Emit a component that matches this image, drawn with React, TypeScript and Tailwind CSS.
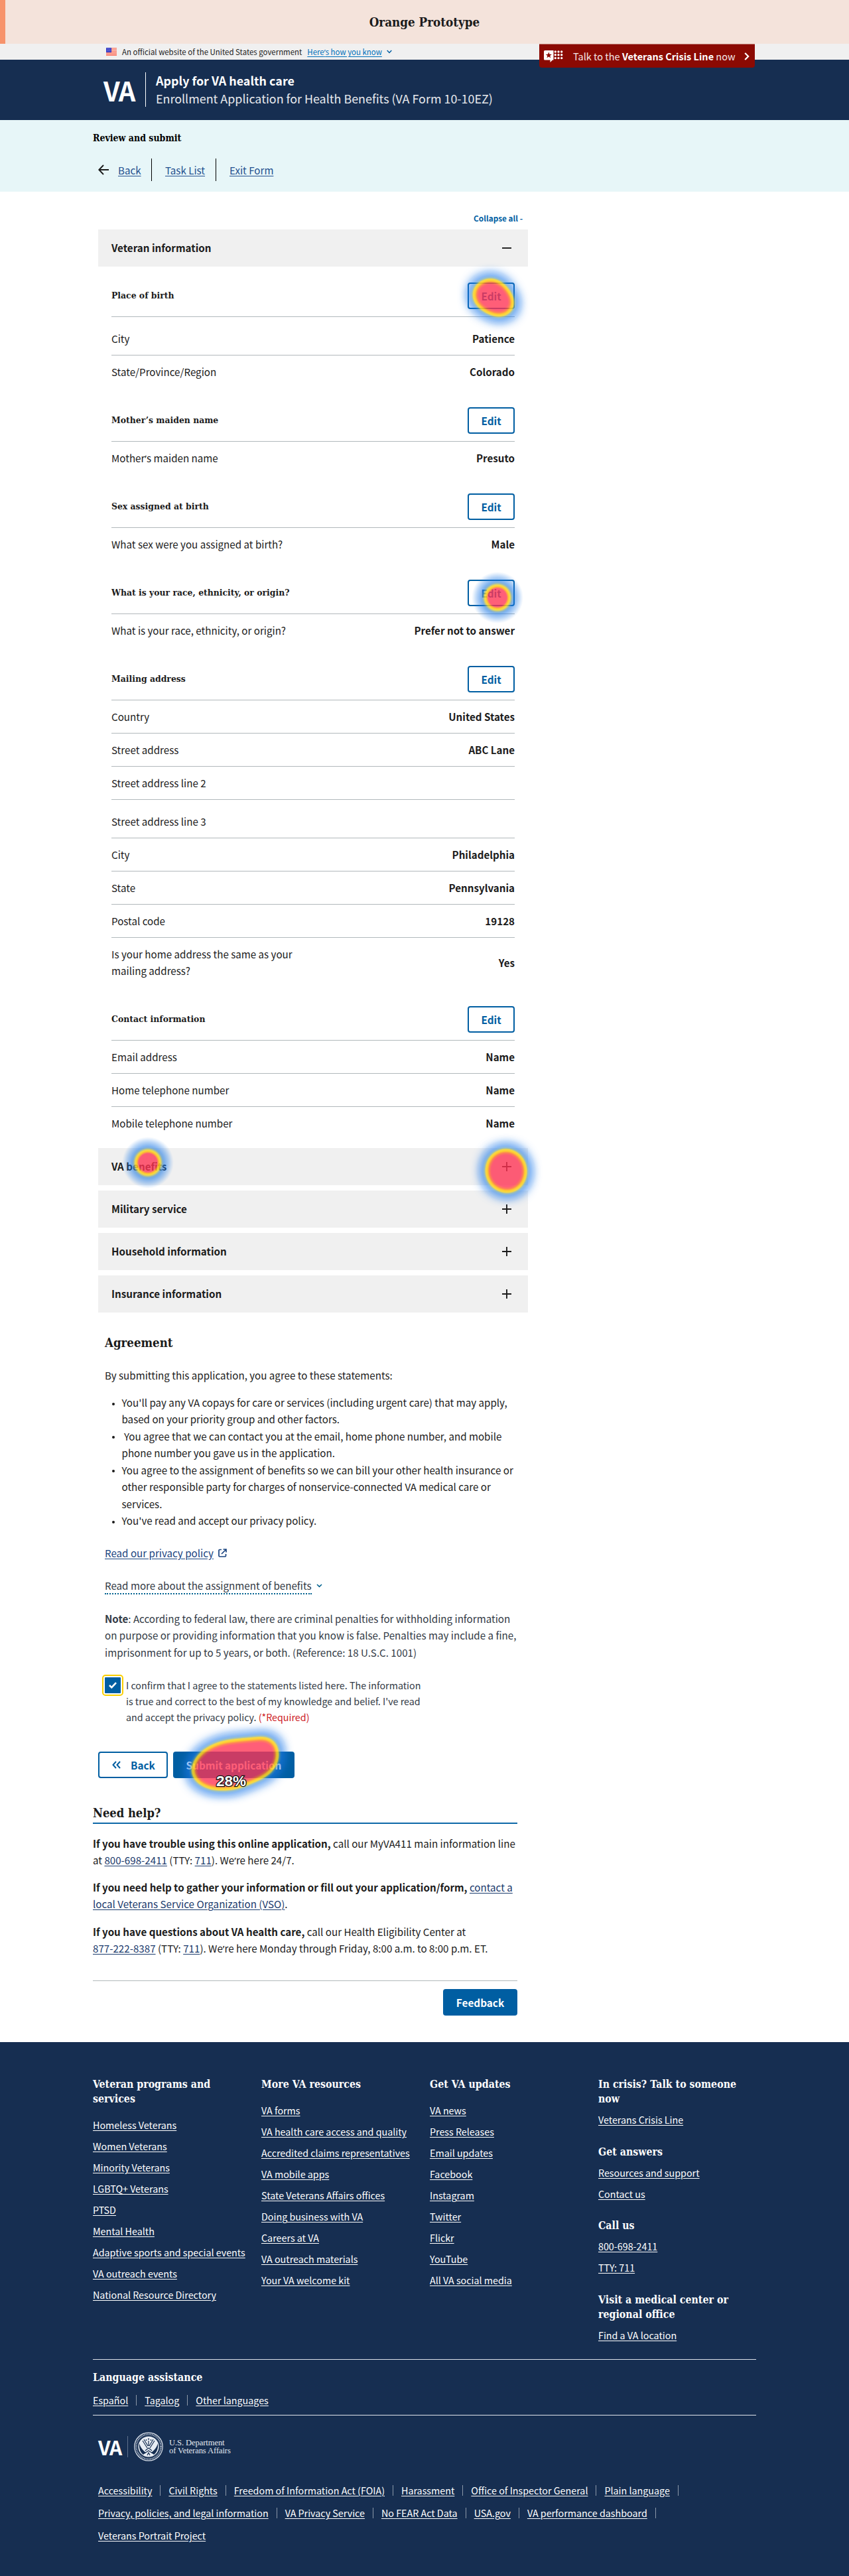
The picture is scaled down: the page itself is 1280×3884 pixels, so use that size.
import { Fragment, type ReactNode } from 'react';

const SERIF = "font-['DejaVu_Serif_Condensed','DejaVu_Serif',serif] font-bold";

/* Curly apostrophe set in a proportional face. */
function Apos() {
  return <span className="font-['Noto_Sans',sans-serif] leading-none">’</span>;
}

/* ---------- click heat map ---------- */

function HeatDefs() {
  return (
    <svg className="absolute h-0 w-0" aria-hidden="true">
      <defs>
        <filter id="heat" x="-60%" y="-60%" width="220%" height="220%" colorInterpolationFilters="sRGB">
          <feGaussianBlur stdDeviation="10" />
          <feColorMatrix values="0 0 0 1 0  0 0 0 1 0  0 0 0 1 0  0 0 0 1 0" />
          <feComponentTransfer>
            <feFuncR type="table" tableValues="0.12 0.12 0.12 0.12 0.35 0.97 1 1 1 1 1" />
            <feFuncG type="table" tableValues="0.48 0.48 0.48 0.48 0.6 0.84 0.78 0.4 0.2 0.2 0.2" />
            <feFuncB type="table" tableValues="0.92 0.92 0.92 0.92 0.7 0.18 0.1 0.2 0.33 0.33 0.33" />
            <feFuncA type="table" tableValues="0 0.27 0.42 0.53 0.64 0.88 0.9 0.82 0.79 0.79 0.79" />
          </feComponentTransfer>
        </filter>
      </defs>
    </svg>
  );
}

function HeatShape({ points }: { points: string }) {
  return (
    <svg className="pointer-events-none absolute top-0 left-0 z-10 overflow-visible" width="1" height="1" aria-hidden="true">
      <g filter="url(#heat)">
        <polygon points={points} fill="#000" stroke="#000" strokeWidth="10" strokeLinejoin="round" />
      </g>
    </svg>
  );
}

function HeatDot({ className }: { className: string }) {
  return (
    <span
      className={`pointer-events-none absolute z-10 h-[78px] w-[78px] rounded-full bg-[radial-gradient(closest-side,rgba(255,52,84,0.79)_0%,rgba(255,52,84,0.79)_35%,rgba(255,195,20,0.88)_43%,rgba(245,214,40,0.86)_48%,rgba(80,145,195,0.7)_57%,rgba(30,122,230,0.57)_63%,rgba(30,122,230,0.33)_79%,rgba(30,122,230,0.08)_94%,rgba(30,122,230,0)_100%)] ${className}`}
    />
  );
}

/* ---------- form summary ---------- */

type Row = { label: ReactNode; value?: string; roomy?: boolean };
type Group = { title: string; rows: Row[]; heat?: ReactNode };

const groups: Group[] = [
  {
    title: 'Place of birth',
    rows: [
      { label: 'City', value: 'Patience', roomy: true },
      { label: 'State/Province/Region', value: 'Colorado' },
    ],
    heat: <HeatShape points="11,16 17,4 33,-2.5 47,1 59,14 67,29 63,43 47,48 27,40 14,29" />,
  },
  {
    title: 'Mother’s maiden name',
    rows: [
      {
        label: (
          <>
            Mother
            <Apos />s maiden name
          </>
        ),
        value: 'Presuto',
      },
    ],
  },
  { title: 'Sex assigned at birth', rows: [{ label: 'What sex were you assigned at birth?', value: 'Male' }] },
  {
    title: 'What is your race, ethnicity, or origin?',
    rows: [{ label: 'What is your race, ethnicity, or origin?', value: 'Prefer not to answer' }],
    heat: <HeatDot className="top-[-12px] left-[6px]" />,
  },
  {
    title: 'Mailing address',
    rows: [
      { label: 'Country', value: 'United States' },
      { label: 'Street address', value: 'ABC Lane' },
      { label: 'Street address line 2' },
      { label: 'Street address line 3', roomy: true },
      { label: 'City', value: 'Philadelphia' },
      { label: 'State', value: 'Pennsylvania' },
      { label: 'Postal code', value: '19128' },
      {
        label: (
          <>
            Is your home address the same as your
            <br />
            mailing address?
          </>
        ),
        value: 'Yes',
      },
    ],
  },
  {
    title: 'Contact information',
    rows: [
      { label: 'Email address', value: 'Name' },
      { label: 'Home telephone number', value: 'Name' },
      { label: 'Mobile telephone number', value: 'Name' },
    ],
  },
];

function FormGroup({ group }: { group: Group }) {
  return (
    <section>
      <div className="flex h-[52px] items-start justify-between border-b border-[#b1b8bb]">
        <h3 className={`${SERIF} text-[13.8px] leading-[38px]`}>{group.title}</h3>
        <div className="relative">
          <button className="flex h-10 w-[71px] items-center justify-center rounded-[4px] border-2 border-[#005ea2] bg-white pb-px text-[15.3px] leading-5 font-bold text-[#005ea2]">
            Edit
          </button>
          {group.heat}
        </div>
      </div>
      {group.rows.map((row, i) => (
        <div
          key={i}
          className={`flex items-center justify-between pb-3 ${row.roomy ? 'pt-5' : 'pt-3'} ${
            i < group.rows.length - 1 ? 'border-b border-[#b1b8bb]' : ''
          }`}
        >
          <span>{row.label}</span>
          <span className="font-bold">{row.value}</span>
        </div>
      ))}
    </section>
  );
}

function AccordionBar({ title, open, children }: { title: string; open?: boolean; children?: ReactNode }) {
  return (
    <div className="relative flex h-14 items-center justify-between bg-[#f0f0f0] pr-[25px] pl-5">
      <span className="pb-0.5 text-[15.2px] leading-6 font-bold">{title}</span>
      <svg width="14" height="14" viewBox="0 0 14 14" className="mb-px" stroke="#1b1b1b" strokeWidth="1.9">
        <path d={open ? 'M0 7H14' : 'M0 7H14M7 0V14'} />
      </svg>
      {children}
    </div>
  );
}

/* ---------- footer ---------- */

const programs = [
  'Homeless Veterans',
  'Women Veterans',
  'Minority Veterans',
  'LGBTQ+ Veterans',
  'PTSD',
  'Mental Health',
  'Adaptive sports and special events',
  'VA outreach events',
  'National Resource Directory',
];
const resources = [
  'VA forms',
  'VA health care access and quality',
  'Accredited claims representatives',
  'VA mobile apps',
  'State Veterans Affairs offices',
  'Doing business with VA',
  'Careers at VA',
  'VA outreach materials',
  'Your VA welcome kit',
];
const updates = [
  'VA news',
  'Press Releases',
  'Email updates',
  'Facebook',
  'Instagram',
  'Twitter',
  'Flickr',
  'YouTube',
  'All VA social media',
];
const legal = [
  ['Accessibility', 'Civil Rights', 'Freedom of Information Act (FOIA)', 'Harassment', 'Office of Inspector General', 'Plain language'],
  ['Privacy, policies, and legal information', 'VA Privacy Service', 'No FEAR Act Data', 'USA.gov', 'VA performance dashboard'],
  ['Veterans Portrait Project'],
];

function FooterHeading({ children }: { children: ReactNode }) {
  return <h4 className={`${SERIF} text-[15.8px] leading-[22px]`}>{children}</h4>;
}

function FooterLinks({ items }: { items: string[] }) {
  return (
    <ul>
      {items.map((item) => (
        <li key={item} className="h-8 leading-8 whitespace-nowrap">
          <a className="underline underline-offset-2">{item}</a>
        </li>
      ))}
    </ul>
  );
}

function Bar() {
  return <span className="mx-3 h-4 w-px bg-[#8b97a8]" />;
}

function Seal() {
  return (
    <svg width="44" height="44" viewBox="0 0 44 44">
      <circle cx="22" cy="22" r="21.2" fill="none" stroke="#dfe5ee" strokeWidth="1.2" />
      <circle cx="22" cy="22" r="18.6" fill="none" stroke="#aab6c8" strokeWidth="2.4" strokeDasharray="1.3 1" />
      <circle cx="22" cy="22" r="15.6" fill="#e8edf4" />
      <path d="M8 17c2 7 6 11 10 14l-4 3c-4-3-7-9-6-17zM36 17c-2 7-6 11-10 14l4 3c4-3 7-9 6-17z" fill="#162e51" />
      <path
        d="M13 13l7 11M31 13l-7 11M15 11l6 10M29 11l-6 10M22 13v8M17 28l5-4 5 4M16 32l6-4 6 4M20 35l2-4 2 4"
        stroke="#162e51"
        strokeWidth="1.2"
        fill="none"
      />
      <circle cx="22" cy="10.5" r="1.1" fill="#162e51" />
      <circle cx="18.5" cy="12" r=".9" fill="#162e51" />
      <circle cx="25.5" cy="12" r=".9" fill="#162e51" />
    </svg>
  );
}

function Flag() {
  return (
    <svg width="16" height="12" viewBox="0 0 16 12" className="shrink-0">
      <rect width="16" height="12" fill="#fbd3c8" />
      <path d="M0 .8H16M0 3H16M0 5.2H16M0 7.3H16M0 9.4H16M0 11.4H16" stroke="#f9705f" strokeWidth="1.1" />
      <rect width="8" height="7" fill="#2f35c4" />
      <path d="M1 1.5h6M2 3.2h5M1 4.9h6" stroke="#c9caf5" strokeWidth=".8" strokeDasharray=".8 1" />
    </svg>
  );
}

const link = 'underline underline-offset-2 text-[#1a3a6c]';

export default function App() {
  return (
    <div className="relative h-[3884px] w-[1280px] overflow-hidden bg-white font-['Noto_Sans_CJK_SC',sans-serif] text-[15.15px] leading-[25px] text-[#1b1b1b]">
      <HeatDefs />

      <div className="flex h-[66px] items-center justify-center border-l-8 border-[#f7936b] bg-[#f4e3db] pr-2">
        <h1 className={`${SERIF} text-[18.7px] leading-6`}>Orange Prototype</h1>
      </div>

      <div className="relative flex h-6 items-center bg-[#f0f0f0] pl-[160px] text-[11.45px] leading-6">
        <Flag />
        <span className="ml-2">An official website of the United States government</span>
        <a className="ml-2 text-[#0071bb] underline underline-offset-2">
          Here
          <Apos />s how you know
        </a>
        <svg width="8" height="6" viewBox="0 0 8 6" className="ml-[7px]" fill="none" stroke="#005ea2" strokeWidth="1.5">
          <path d="M.7 1l3.3 3.4L7.3 1" />
        </svg>
        <a className="absolute top-0 left-[813px] z-10 flex h-9 w-[325px] items-center rounded-b-[4px] border-t border-[#c08078] bg-[#8b0a03] pt-px pl-[7px] text-[14.5px] text-white">
          <svg width="29" height="18" viewBox="0 0 29 18" fill="#fff">
            <path d="M1.5 0H14.5V14.5H13L9.5 18V14.5H1.5Q0 14.5 0 13V1.5Q0 0 1.5 0Z" />
            <path d="M7.3 2.6l1.2 3.2 3.4.1-2.7 2.1 1 3.3-2.9-1.9-2.900 1.900 1-3.300L2.700 5.900l3.400-.1z" fill="#8b0a03" />
            {[2, 6.8, 11.6].map((y) =>
              [17.3, 22, 26.7].map((x) => <circle key={`${x}-${y}`} cx={x} cy={y} r="1.7" />),
            )}
          </svg>
          <span className="ml-[15px] whitespace-nowrap text-white/90">
            Talk to the <b className="text-white">Veterans Crisis Line</b> now
          </span>
          <svg width="8" height="12" viewBox="0 0 8 12" className="mr-2 ml-auto" fill="none" stroke="#fff" strokeWidth="2.2">
            <path d="M1.2 1l5 5-5 5" />
          </svg>
        </a>
      </div>

      <header className="flex h-[91px] items-start bg-[#162e51] pt-[18px] pl-[156px] text-white">
        <span className="mt-[8px] w-[63px] text-[40px] leading-[40px] font-bold tracking-[-1.2px]">VA</span>
        <span className="mt-px h-[52px] w-px bg-white" />
        <div className="ml-[15px] text-[17.9px] leading-[26.5px]">
          <div className="font-bold">Apply for VA health care</div>
          <div className="text-white/90">Enrollment Application for Health Benefits (VA Form 10-10EZ)</div>
        </div>
      </header>

      <div className="h-[108px] bg-[#e7f6f8] pt-[15px] pl-[140px]">
        <h2 className={`${SERIF} text-[14px] leading-6 text-black`}>Review and submit</h2>
        <div className="mt-[19px] flex h-[34px] items-center pl-2 text-[#24508f]">
          <svg width="16" height="16" viewBox="0 0 16 16" fill="none" stroke="#1b1b1b" strokeWidth="1.9">
            <path d="M16 8H1.5M8 1L1.3 8 8 15" />
          </svg>
          <a className="ml-3.5 w-[35px] underline underline-offset-2">Back</a>
          <span className="ml-[15px] h-full w-px bg-black" />
          <a className="ml-5 w-[60px] whitespace-nowrap underline underline-offset-2">Task List</a>
          <span className="ml-4 h-full w-px bg-black" />
          <a className="ml-5 whitespace-nowrap underline underline-offset-2">Exit Form</a>
        </div>
      </div>

      <main className="ml-[148px] w-[648px]">
        <div className="pt-[30px] pr-2 pb-[7px] text-right text-[11.8px] leading-5 font-bold text-[#005ea2]">Collapse all -</div>
        <AccordionBar title="Veteran information" open />
        <div className="flex flex-col gap-[29px] px-5 pt-6 pb-[13px]">
          {groups.map((g) => (
            <FormGroup key={g.title} group={g} />
          ))}
        </div>
        <div className="flex flex-col gap-2">
          <AccordionBar title="VA benefits">
            <HeatDot className="top-[-17px] left-[36px]" />
            <HeatShape points="615,5 627,8 637,17 642,30 641,45 634,57 623,63 611,63 598,57 590,46 588,33 591,19 600,9" />
          </AccordionBar>
          <AccordionBar title="Military service" />
          <AccordionBar title="Household information" />
          <AccordionBar title="Insurance information" />
        </div>

        <section className="px-2.5 pt-[31.5px]">
          <h2 className={`${SERIF} text-[18.5px] leading-7`}>Agreement</h2>
          <p className="mt-[22px] leading-[25.5px]">By submitting this application, you agree to these statements:</p>
          <ul className="mt-4 list-none pl-[25.5px] leading-[25.43px] whitespace-nowrap [&>li]:relative [&>li]:before:absolute [&>li]:before:top-[12.5px] [&>li]:before:-left-[15px] [&>li]:before:size-1 [&>li]:before:rounded-full [&>li]:before:bg-[#1b1b1b]">
            <li>
              You'll pay any VA copays for care or services (including urgent care) that may apply,
              <br />
              based on your priority group and other factors.
            </li>
            <li>
              &nbsp;You agree that we can contact you at the email, home phone number, and mobile
              <br />
              phone number you gave us in the application.
            </li>
            <li>
              You agree to the assignment of benefits so we can bill your other health insurance or
              <br />
              other responsible party for charges of nonservice-connected VA medical care or
              <br />
              services.
            </li>
            <li>You've read and accept our privacy policy.</li>
          </ul>
          <div className="mt-[23px] flex h-[25.5px] items-center leading-[25.5px] text-[#1a4480]">
            <a className="underline underline-offset-2">Read our privacy policy</a>
            <svg width="13" height="13" viewBox="0 0 13 13" className="ml-[7px]" fill="none" stroke="#1a4480" strokeWidth="1.7">
              <path d="M5 1.5H2.3Q1 1.5 1 2.8V10.7Q1 12 2.3 12H10.2Q11.5 12 11.5 10.7V8M7.5 1H12V5.5M12 1L5 8" />
            </svg>
          </div>
          <div className="mt-6 flex h-[26px] items-center text-[#323a45]">
            <span className="h-[26px] border-b-2 border-dotted border-[#00618f] leading-[25.5px]">
              Read more about the assignment of benefits
            </span>
            <svg width="9" height="6" viewBox="0 0 9 6" className="ml-[7px]" fill="none" stroke="#00618f" strokeWidth="1.5">
              <path d="M1 1l3.5 3.4L8 1" />
            </svg>
          </div>
          <p className="mt-[23.5px] leading-[25.5px] whitespace-nowrap text-[#323a45]">
            <b>Note</b>: According to federal law, there are criminal penalties for withholding information
            <br />
            on purpose or providing information that you know is false. Penalties may include a fine,
            <br />
            imprisonment for up to 5 years, or both. (Reference: 18 U.S.C. 1001)
          </p>
          <div className="mt-[25px] flex text-[#323a45]">
            <span className="flex h-6 w-6 shrink-0 items-center justify-center rounded-[1px] bg-[#005ea2] outline-2 outline-offset-2 outline-[#face00]">
              <svg width="12" height="10" viewBox="0 0 12 10" fill="none" stroke="#fff" strokeWidth="2.6">
                <path d="M1 5l3.3 3.3L11 1.2" />
              </svg>
            </span>
            <p className="ml-2 text-[14.3px] leading-6 whitespace-nowrap">
              I confirm that I agree to the statements listed here. The information
              <br />
              is true and correct to the best of my knowledge and belief. I've read
              <br />
              and accept the privacy policy. <span className="text-[#cd2026]">(*Required)</span>
            </p>
          </div>
        </section>

        <div className="relative mt-10 flex gap-2 text-[15.3px] leading-5 font-bold">
          <button className="flex h-10 w-[105px] items-center rounded-[4px] border-2 border-[#005ea2] bg-white pl-[19px] text-[#005ea2]">
            <svg width="13" height="12" viewBox="0 0 13 12" fill="none" stroke="#005ea2" strokeWidth="2">
              <path d="M6 1L1.5 6 6 11M12 1L7.5 6 12 11" />
            </svg>
            <span className="ml-[15px]">Back</span>
          </button>
          <button className="h-10 w-[183px] rounded-[4px] bg-[#005ea2] whitespace-nowrap text-white">Submit application</button>
          <HeatShape points="144,31 149,14 164,-1 187,-11 212,-14 237,-16 254,-18 265,-11 268,4 265,19 252,33 227,44 202,53 172,53 152,44" />
          <span className="absolute top-[33px] left-[178px] z-20 font-['Liberation_Sans',sans-serif] text-[22.5px] leading-6 font-bold text-white [-webkit-text-stroke:2.6px_#111] [paint-order:stroke_fill]">
            28%
          </span>
        </div>
      </main>

      <section className="mt-10 ml-[140px] w-[640px]">
        <h2 className={`${SERIF} border-b-2 border-[#0d68a8] pb-px text-[18.2px] leading-[26px]`}>Need help?</h2>
        <div className="mt-[16.5px] flex flex-col gap-[16.8px] whitespace-nowrap">
          <p>
            <b>If you have trouble using this online application,</b> call our MyVA411 main information line
            <br />
            at <a className={link}>800-698-2411</a> (TTY: <a className={link}>711</a>). We
            <Apos />
            re here 24/7.
          </p>
          <p>
            <b>If you need help to gather your information or fill out your application/form,</b>{' '}
            <a className={link}>
              contact a
              <br />
              local Veterans Service Organization (VSO)
            </a>
            .
          </p>
          <p>
            <b>If you have questions about VA health care,</b> call our Health Eligibility Center at
            <br />
            <a className={link}>877-222-8387</a> (TTY: <a className={link}>711</a>). We
            <Apos />
            re here Monday through Friday, 8:00 a.m. to 8:00 p.m. ET.
          </p>
        </div>
        <div className="mt-9 flex h-[93px] justify-end border-t border-[#b1b8bb] pt-3">
          <button className="h-10 w-28 rounded-[4px] bg-[#005ea2] pb-px text-[15.3px] leading-5 font-bold text-white">Feedback</button>
        </div>
      </section>

      <footer className="h-[805px] bg-[#162e51] px-[140px] pt-[53px] text-[14.3px] text-white">
        <div className="grid h-[426px] grid-cols-[254px_254px_254px_238px] border-b border-[#dfe3ea]">
          <div className="flex flex-col gap-[12.4px]">
            <FooterHeading>
              Veteran programs and
              <br />
              services
            </FooterHeading>
            <FooterLinks items={programs} />
          </div>
          <div className="flex flex-col gap-[12.4px]">
            <FooterHeading>More VA resources</FooterHeading>
            <FooterLinks items={resources} />
          </div>
          <div className="flex flex-col gap-[12.4px]">
            <FooterHeading>Get VA updates</FooterHeading>
            <FooterLinks items={updates} />
          </div>
          <div className="flex flex-col gap-[21.5px] whitespace-nowrap">
            <div className="flex flex-col gap-1">
              <FooterHeading>
                In crisis? Talk to someone
                <br />
                now
              </FooterHeading>
              <FooterLinks items={['Veterans Crisis Line']} />
            </div>
            <div className="flex flex-col gap-1">
              <FooterHeading>Get answers</FooterHeading>
              <FooterLinks items={['Resources and support', 'Contact us']} />
            </div>
            <div className="flex flex-col gap-1">
              <FooterHeading>Call us</FooterHeading>
              <FooterLinks items={['800-698-2411', 'TTY: 711']} />
            </div>
            <div className="flex flex-col gap-1">
              <FooterHeading>
                Visit a medical center or
                <br />
                regional office
              </FooterHeading>
              <FooterLinks items={['Find a VA location']} />
            </div>
          </div>
        </div>

        <div className="h-[84px] border-b border-[#dfe3ea] pt-[15.5px]">
          <FooterHeading>Language assistance</FooterHeading>
          <div className="mt-[11px] flex h-6 items-center leading-6">
            <a className="underline underline-offset-2">Español</a>
            <Bar />
            <a className="underline underline-offset-2">Tagalog</a>
            <Bar />
            <a className="underline underline-offset-2">Other languages</a>
          </div>
        </div>

        <div className="mt-[25px] flex h-11 items-center pl-2">
          <span className="w-11 text-[30px] leading-[30px] font-bold tracking-[-1px]">VA</span>
          <span className="h-8 w-px bg-[#5f708b]" />
          <span className="ml-[9px]">
            <Seal />
          </span>
          <span className="ml-[9px] font-['Liberation_Serif',serif] text-[12.6px] leading-[12.5px] tracking-[-0.1px] whitespace-nowrap text-[#e3e8f0]">
            U.S. Department
            <br />
            of Veterans Affairs
          </span>
        </div>

        <div className="mt-[27px] pl-2">
          {legal.map((line, i) => (
            <div key={i} className="flex h-[34px] items-center leading-[34px] whitespace-nowrap">
              {line.map((item) => (
                <Fragment key={item}>
                  <a className="underline underline-offset-2">{item}</a>
                  {i < 2 && <Bar />}
                </Fragment>
              ))}
            </div>
          ))}
        </div>
      </footer>
    </div>
  );
}
